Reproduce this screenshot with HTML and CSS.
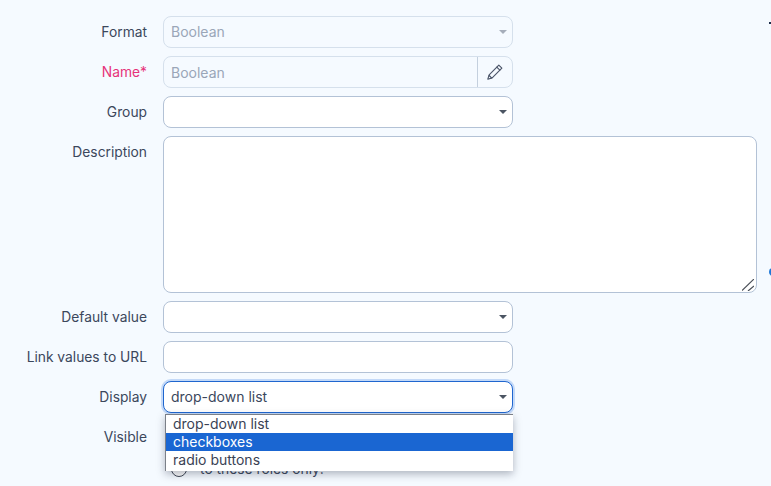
FILE: index.html
```html
<!DOCTYPE html>
<html lang="en">
<head>
<meta charset="utf-8">
<title>Custom field</title>
<link rel="stylesheet" href="styles.css">
</head>
<body>
<form class="form">
  <div class="row">
    <label class="label">Format</label>
    <div class="control select disabled"><span>Boolean</span><i class="caret"></i></div>
  </div>
  <div class="row">
    <label class="label required">Name*</label>
    <div class="control group disabled">
      <span class="group-text">Boolean</span>
      <span class="group-btn">
        <svg width="18" height="18" viewBox="0 0 16 16" fill="none" stroke="#4a5468" stroke-width="1" stroke-linejoin="round" stroke-linecap="round"><path d="M11.4 1.9l2.7 2.7-8.6 8.6-3.9 1.2 1.2-3.9z"/><path d="M9.6 3.7l2.7 2.7"/><path d="M2.8 11.1l2.1 2.1"/></svg>
      </span>
    </div>
  </div>
  <div class="row">
    <label class="label">Group</label>
    <div class="control select"><span></span><i class="caret"></i></div>
  </div>
  <div class="row">
    <label class="label">Description</label>
    <div class="control textarea">
      <svg class="grip" width="12" height="12" viewBox="0 0 12 12" stroke="#4a4f58" stroke-width="1.2"><path d="M0 11.5L12 0M6 12l6-5"/></svg>
    </div>
  </div>
  <div class="row">
    <label class="label">Default value</label>
    <div class="control select"><span></span><i class="caret"></i></div>
  </div>
  <div class="row">
    <label class="label">Link values to URL</label>
    <div class="control"></div>
  </div>
  <div class="row">
    <label class="label">Display</label>
    <div class="dropdown-wrap">
      <div class="control select focused"><span>drop-down list</span><i class="caret"></i></div>
      <ul class="menu">
        <li>drop-down list</li>
        <li class="active">checkboxes</li>
        <li>radio buttons</li>
      </ul>
    </div>
  </div>
  <div class="row row-visible">
    <label class="label">Visible</label>
    <div class="radios">
      <div class="radio-line"><i class="radio"></i></div>
      <div class="radio-line"><i class="radio"></i><span class="radio-text">to these roles only:</span></div>
    </div>
  </div>
</form>
<i class="edge-dash"></i>
<i class="edge-dot"></i>
</body>
</html>
```
FILE: styles.css
```css
* { box-sizing: border-box; }
html, body { height: 100%; overflow: hidden; }
body {
  margin: 0;
  background: #f5faff;
  color: #3b475c;
  font: 14px/20px Inter, "Liberation Sans", sans-serif;
  position: relative;
}
.form {
  display: flex;
  flex-direction: column;
  gap: 8px;
  padding: 16px 14px 0 0;
}
.row { display: flex; gap: 16px; }
.label {
  flex: none;
  width: 147px;
  text-align: right;
  padding-top: 6px;
  font-size: 13.8px;
}
.required { color: #e6327a; }
.control {
  width: 350px;
  height: 32px;
  background: #fff;
  border: 1px solid #b3c2d6;
  border-radius: 8px;
  padding: 0 7px;
  display: flex;
  align-items: center;
  justify-content: space-between;
}
.disabled {
  background: #f5faff;
  border-color: #d5e0ec;
  color: #9aa6b8;
}
.caret {
  width: 0;
  height: 0;
  margin-right: -2px;
  border: 4px solid transparent;
  border-top-color: #4b5563;
  border-bottom-width: 0;
}
.disabled .caret { border-top-color: #a5adba; }
.group { padding: 0 0 0 7px; }
.group-text { flex: 1; padding-top: 2px; }
.group-btn {
  width: 35px;
  height: 100%;
  border-left: 1px solid #c4d0de;
  display: flex;
  align-items: center;
  justify-content: center;
}
.textarea {
  width: 594px;
  height: 157px;
  position: relative;
}
.grip { position: absolute; right: 2px; bottom: 1px; }
.dropdown-wrap { position: relative; }
.focused {
  border-color: #1f66cf;
  box-shadow: 0 0 0 2px #c3d9f8;
  color: #3b475c;
}
.menu {
  position: absolute;
  left: 2px;
  top: 33px;
  width: 348px;
  height: 57px;
  margin: 0;
  padding: 0;
  list-style: none;
  background: #fff;
  border: 1px solid #7b8088;
  border-bottom: 0;
  border-right: 0;
  box-shadow: 0 3px 8px rgba(40, 50, 70, .35);
  line-height: 18px;
  color: #3a4254;
  z-index: 2;
}
.menu li { padding-left: 7px; height: 18px; }
.menu .active { background: #1a66d2; color: #fff; }
.radios { display: flex; flex-direction: column; gap: 12px; padding: 6px 0 0 8px; }
.radio-line { display: flex; align-items: center; gap: 13px; height: 20px; }
.radio-text { font-size: 13.8px; }
.radio {
  width: 16px;
  height: 16px;
  flex: none;
  background: #fff;
  border: 1px solid #3f4654;
  border-radius: 50%;
}
.edge-dash {
  position: absolute;
  left: 769px;
  top: 22px;
  width: 2px;
  height: 2px;
  background: #1d2d4a;
}
.edge-dot {
  position: absolute;
  left: 769px;
  top: 268px;
  width: 8px;
  height: 8px;
  border-radius: 50%;
  background: #1f78d8;
}
```
